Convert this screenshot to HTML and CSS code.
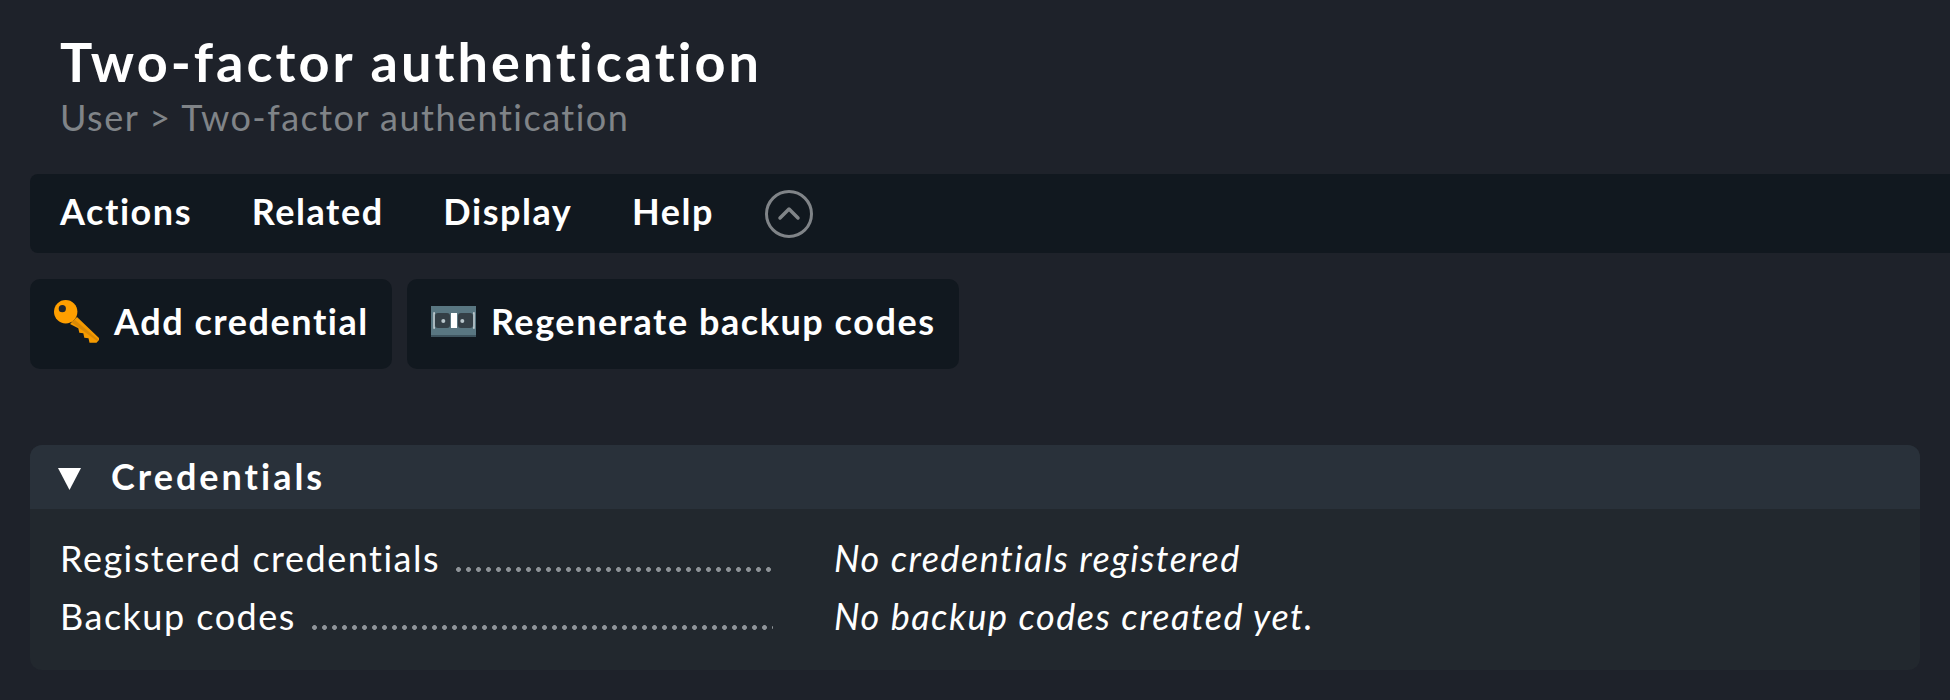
FILE: index.html
```html
<!DOCTYPE html>
<html lang="en">
<head>
    <meta charset="UTF-8">
    <title>Two-factor authentication</title>
    <link rel="stylesheet" href="styles.css">
</head>
<body>
    <div class="titlebar">
        <h1>Two-factor authentication</h1>
        <div class="breadcrumb">User &gt; Two-factor authentication</div>
    </div>

    <div class="menubar">
        <a class="menu-item">Actions</a>
        <a class="menu-item">Related</a>
        <a class="menu-item">Display</a>
        <a class="menu-item">Help</a>
        <svg class="toggle" width="48" height="48" viewBox="0 0 48 48">
            <circle cx="24" cy="24" r="22.5" fill="none" stroke="#808488" stroke-width="3"/>
            <path d="M15 28 L24 19 L33 28" fill="none" stroke="#808488" stroke-width="3.5" stroke-linecap="round" stroke-linejoin="round"/>
        </svg>
    </div>

    <div class="shortcuts">
        <a class="shortcut">
            <svg class="icon" width="46" height="44" viewBox="0 0 46 44">
                <path d="M16 24 L23 17 L45 38 L45 40 L42.5 42.7 L35.5 42.7 L34.5 38.3 L30.3 37.7 L29.3 33.3 L25.3 32.7 L24.3 28.3 Z" fill="#f59a00"/>
                <path d="M17 22 L21 20 L44 39.5 L43 41 Z" fill="#d98906"/>
                <circle cx="11.7" cy="11.7" r="11.7" fill="#ff9f00"/>
                <circle cx="8.3" cy="8.7" r="3.6" fill="#20262e"/>
            </svg>
            Add credential
        </a>
        <a class="shortcut">
            <svg class="icon" width="46" height="31" viewBox="0 0 46 31">
                <rect width="45" height="30" fill="#597681"/>
                <rect y="29" width="45" height="2" fill="#3f5560"/>
                <rect x="4" y="7" width="15" height="15" rx="3" fill="#343f46"/>
                <rect x="27" y="7" width="15" height="15" rx="3" fill="#343f46"/>
                <rect x="20" y="7" width="6" height="15" fill="#fff"/>
                <circle cx="12.3" cy="15" r="2" fill="#b9c6cb"/>
                <circle cx="31.3" cy="15" r="2" fill="#b9c6cb"/>
                <path d="M4 7 H3 V22 H4 M42 7 H43 V22 H42" fill="none" stroke="#c4ced2" stroke-width="1.5"/>
            </svg>
            Regenerate backup codes
        </a>
    </div>

    <div class="panel">
        <div class="panel-head">
            <svg class="triangle" width="23" height="22" viewBox="0 0 23 22">
                <path d="M0 0 H23 L11.5 22 Z" fill="#fff"/>
            </svg>
            <span>Credentials</span>
        </div>
        <div class="panel-body">
            <div class="row">
                <div class="label"><span>Registered credentials</span><i class="dots"></i></div>
                <div class="value">No credentials registered</div>
            </div>
            <div class="row">
                <div class="label"><span>Backup codes</span><i class="dots"></i></div>
                <div class="value">No backup codes created yet.</div>
            </div>
        </div>
    </div>
</body>
</html>
```

FILE: styles.css
```css
html, body {
    height: 100%;
}

body {
    margin: 0;
    padding: 0 30px;
    background: #1e222a;
    color: #fff;
    font-family: Lato, "Open Sans", sans-serif;
    overflow: hidden;
}

.titlebar {
    padding: 30px 0 0 30px;
    height: 143px;
    box-sizing: border-box;
}

h1 {
    margin: 0;
    font-size: 54px;
    line-height: 64px;
    font-weight: 700;
    letter-spacing: 3px;
}

.breadcrumb {
    margin-top: 2px;
    color: #808488;
    font-size: 36px;
    line-height: 42px;
    letter-spacing: 1.5px;
}

.menubar {
    display: flex;
    align-items: center;
    height: 79px;
    margin: 31px -30px 0 0;
    padding: 0 0 5px 30px;
    box-sizing: border-box;
    background: #11181f;
    border-radius: 8px 0 0 8px;
}

.menu-item {
    margin-right: 59.7px;
    font-size: 36px;
    font-weight: 700;
    letter-spacing: 1.55px;
}

.toggle {
    margin: 5px 0 0 -9px;
}

.shortcuts {
    display: flex;
    gap: 15px;
    margin-top: 26px;
}

.shortcut {
    display: flex;
    align-items: center;
    height: 90px;
    padding: 0 23px 6px 24px;
    box-sizing: border-box;
    background: #11181f;
    border-radius: 10px;
    font-size: 36px;
    font-weight: 700;
    letter-spacing: 1.55px;
}

.icon {
    margin: 1px 14px 0 0;
}

.panel {
    margin-top: 76px;
    height: 225px;
    background: #22282e;
    border-radius: 12px;
    overflow: hidden;
}

.panel-head {
    display: flex;
    align-items: center;
    height: 64px;
    padding: 0 0 3px 28px;
    box-sizing: border-box;
    background: #29313a;
    font-size: 36px;
    font-weight: 700;
    letter-spacing: 3px;
}

.triangle {
    margin: 7px 30px 0 0;
}

.panel-body {
    padding-top: 27px;
}

.row {
    display: flex;
    height: 58px;
    font-size: 36px;
    line-height: 44px;
    letter-spacing: 1.5px;
}

.label {
    display: flex;
    width: 713px;
    margin-left: 30px;
    overflow: hidden;
}

.dots {
    flex: 1;
    margin: 31px 0 0 16px;
    height: 5px;
    background: radial-gradient(circle at 2.5px 2.5px, #8f9499 2.1px, transparent 2.6px) 0 0 / 10px 5px repeat-x;
}

.value {
    margin-left: 61px;
    font-style: italic;
}
```
